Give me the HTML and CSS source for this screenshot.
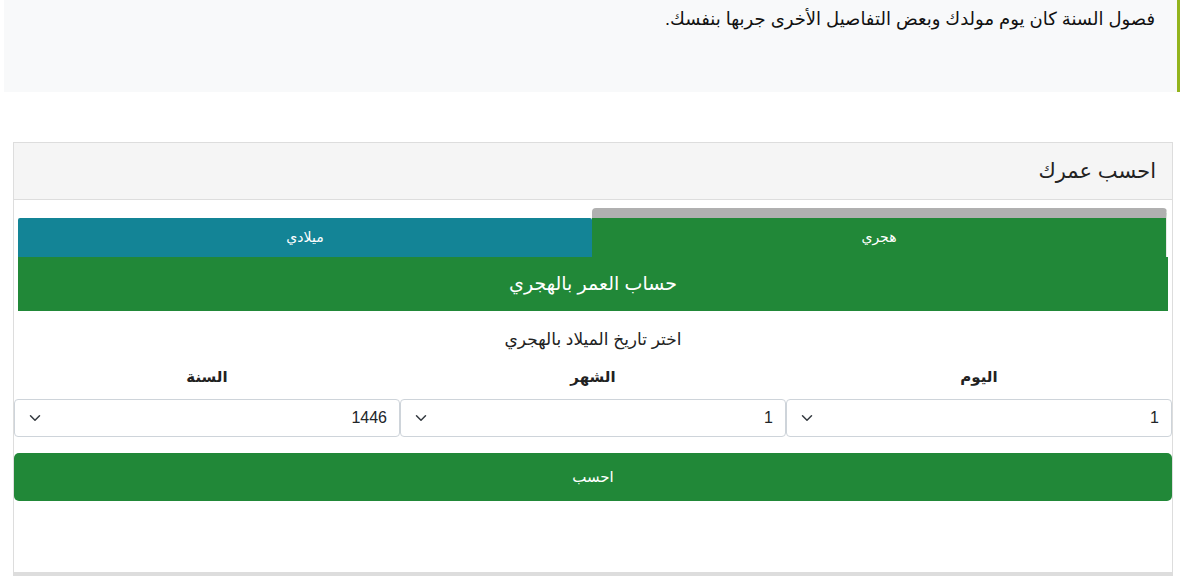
FILE: index.html
```html
<!DOCTYPE html>
<html lang="ar" dir="rtl">
  <head>
    <meta charset="UTF-8" />
    <meta name="viewport" content="width=device-width, initial-scale=1.0" />
    <title>احسب عمرك</title>
    <link rel="stylesheet" href="styles.css">
  </head>
  <body>
    <div class="intro">
      <p>فصول السنة كان يوم مولدك وبعض التفاصيل الأخرى جربها بنفسك.</p>
    </div>

    <div class="card">
      <div class="card-head">
        <h3>احسب عمرك</h3>
      </div>

      <div class="card-body">
        <div class="tabs">
          <div class="tab active">هجري</div>
          <div class="tab">ميلادي</div>
        </div>
        <div class="tab-title">حساب العمر بالهجري</div>

        <p class="hint">اختر تاريخ الميلاد بالهجري</p>

        <div class="fields">
          <div class="field">
            <label>اليوم</label>
            <div class="select">
              <span>1</span>
              <svg viewBox="0 0 16 16" width="12" height="12"><path d="m2 5 6 6 6-6" /></svg>
            </div>
          </div>
          <div class="field">
            <label>الشهر</label>
            <div class="select">
              <span>1</span>
              <svg viewBox="0 0 16 16" width="12" height="12"><path d="m2 5 6 6 6-6" /></svg>
            </div>
          </div>
          <div class="field">
            <label>السنة</label>
            <div class="select">
              <span>1446</span>
              <svg viewBox="0 0 16 16" width="12" height="12"><path d="m2 5 6 6 6-6" /></svg>
            </div>
          </div>
        </div>

        <button class="calc">احسب</button>
      </div>
    </div>
  </body>
</html>
```

FILE: styles.css
```css
body {
  margin: 0;
  font-family: "Liberation Sans", "DejaVu Sans", sans-serif;
  color: #212529;
  background: #fff;
}

.intro {
  margin: 0 14px 0 4px;
  height: 92px;
  box-sizing: border-box;
  padding: 7px 22px 0;
  background: #f8f9fa;
  border-right: 3px solid #93b41d;
}

.intro p {
  margin: 0;
  font-size: 18px;
  line-height: 24px;
  color: #111;
}

.card {
  margin: 50px 21px 0 13px;
  border: 1px solid #ddd;
  border-bottom: 4px solid #ddd;
}

.card-head {
  height: 56px;
  padding: 0 16px;
  background: #f5f5f5;
  border-bottom: 1px solid #ddd;
  display: flex;
  align-items: center;
}

.card-head h3 {
  margin: 0;
  font-size: 21px;
  font-weight: normal;
  color: #222;
}

.card-body {
  padding: 8px 0 71px;
}

.tabs {
  display: flex;
  align-items: flex-end;
  margin: 0 5px 0 4px;
}

.tab {
  flex: 1;
  height: 39px;
  line-height: 39px;
  text-align: center;
  font-size: 14px;
  color: #fff;
  background: #138496;
  border-radius: 2px 2px 0 0;
}

.tab.active {
  background: #218838;
  border-top: 10px solid #b0b0b0;
  border-right: 1px solid #e8e8e8;
  border-radius: 4px 4px 0 0;
}

.tab-title {
  margin: 0 4px;
  height: 54px;
  line-height: 54px;
  text-align: center;
  font-size: 19px;
  color: #fff;
  background: #218838;
}

.hint {
  margin: 19px 0 0;
  line-height: 20px;
  text-align: center;
  font-size: 17px;
  color: #222;
}

.fields {
  display: grid;
  grid-template-columns: repeat(3, 1fr);
  margin-top: 17px;
}

.field label {
  display: block;
  line-height: 20px;
  text-align: center;
  font-size: 15px;
  font-weight: bold;
  color: #222;
  margin-bottom: 12px;
}

.select {
  height: 38px;
  box-sizing: border-box;
  padding: 0 12px;
  border: 1px solid #ced4da;
  border-radius: 4px;
  display: flex;
  align-items: center;
  justify-content: space-between;
  font-size: 16px;
}

.select svg {
  margin-left: 2px;
  fill: none;
  stroke: #343a40;
  stroke-width: 2;
  stroke-linecap: round;
  stroke-linejoin: round;
}

.calc {
  display: block;
  width: 100%;
  height: 48px;
  margin-top: 16px;
  border: 0;
  border-radius: 5px;
  background: #218838;
  color: #fff;
  font-family: inherit;
  font-size: 15px;
}
```
